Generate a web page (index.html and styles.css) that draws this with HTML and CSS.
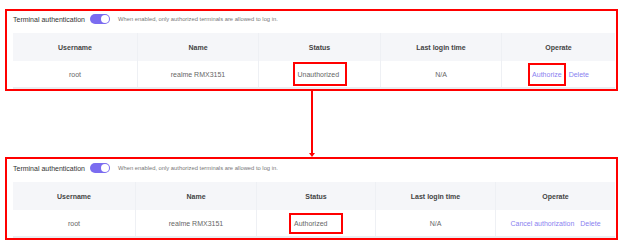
FILE: index.html
```html
<!DOCTYPE html>
<html lang="en">
<head>
  <meta charset="UTF-8">
  <meta name="viewport" content="width=device-width, initial-scale=1.0">
  <title>Terminal authentication</title>
  <link rel="stylesheet" href="styles.css">
</head>
<body>
  <div class="page">
    <div class="panel panel-before">
      <div class="panel-head">
        <span class="panel-title">Terminal authentication</span>
        <span class="switch"><span class="switch-knob"></span></span>
        <span class="panel-hint">When enabled, only authorized terminals are allowed to log in.</span>
      </div>
      <div class="table">
        <div class="row row-head">
          <div class="cell">Username</div>
          <div class="cell">Name</div>
          <div class="cell">Status</div>
          <div class="cell">Last login time</div>
          <div class="cell">Operate</div>
        </div>
        <div class="row">
          <div class="cell">root</div>
          <div class="cell">realme RMX3151</div>
          <div class="cell"><span class="mark mark-status">Unauthorized</span></div>
          <div class="cell">N/A</div>
          <div class="cell ops">
            <a class="link mark mark-op">Authorize</a>
            <a class="link">Delete</a>
          </div>
        </div>
      </div>
    </div>

    <div class="arrow">
      <span class="arrow-line"></span>
      <span class="arrow-head"></span>
    </div>

    <div class="panel panel-after">
      <div class="panel-head">
        <span class="panel-title">Terminal authentication</span>
        <span class="switch"><span class="switch-knob"></span></span>
        <span class="panel-hint">When enabled, only authorized terminals are allowed to log in.</span>
      </div>
      <div class="table">
        <div class="row row-head">
          <div class="cell">Username</div>
          <div class="cell">Name</div>
          <div class="cell">Status</div>
          <div class="cell">Last login time</div>
          <div class="cell">Operate</div>
        </div>
        <div class="row">
          <div class="cell">root</div>
          <div class="cell">realme RMX3151</div>
          <div class="cell"><span class="mark mark-status">Authorized</span></div>
          <div class="cell">N/A</div>
          <div class="cell ops ops-wide">
            <a class="link">Cancel authorization</a>
            <a class="link">Delete</a>
          </div>
        </div>
      </div>
    </div>
  </div>
</body>
</html>
```

FILE: styles.css
```css
  body {
    margin: 0;
    background-color: #ffffff;
    font-family: 'Liberation Sans', Arial, sans-serif;
    color: #555;
  }

  .page {
    padding: 9px 6px 0 5px;
  }

  .panel {
    border: 2px solid #ff0000;
    padding: 0 1px 0 6px;
    background: #ffffff;
  }

  .panel-head {
    display: flex;
    align-items: center;
    height: 16px;
    margin-bottom: 6px;
  }

  .panel-after .panel-head {
    height: 18px;
    margin-bottom: 5px;
  }

  .panel-title {
    font-size: 7px;
    color: #333;
  }

  .switch {
    display: flex;
    justify-content: flex-end;
    align-items: center;
    width: 20px;
    height: 10px;
    margin-left: 5px;
    padding: 0 1px;
    box-sizing: border-box;
    border-radius: 5px;
    background-color: #7b6cf0;
  }

  .switch-knob {
    width: 8px;
    height: 8px;
    border-radius: 50%;
    background: #ffffff;
  }

  .panel-hint {
    margin-left: 8px;
    font-size: 5.8px;
    color: #777;
  }

  .table {
    border-bottom: 2px solid #e9edf1;
  }

  .row {
    display: grid;
    grid-template-columns: 124px 121px 122px 121px 1fr;
    height: 26px;
  }

  .panel-after .row {
    grid-template-columns: 122px 121px 119px 120px 1fr;
  }

  .row-head {
    height: 28px;
    background-color: #f5f6f9;
  }

  .cell {
    display: flex;
    justify-content: center;
    align-items: center;
    font-size: 7px;
    color: #666;
    border-left: 1px solid #eef0f4;
  }

  .cell:first-child {
    border-left: none;
  }

  .row-head .cell {
    font-weight: bold;
    color: #444;
  }

  .ops {
    gap: 3px;
  }

  .ops-wide {
    gap: 6px;
  }

  .link {
    color: #8a7ff0;
    cursor: pointer;
  }

  .mark {
    display: flex;
    align-items: center;
    box-sizing: border-box;
    border: 2px solid #ff0000;
  }

  .mark-status {
    width: 54px;
    height: 24px;
    padding-left: 3px;
  }

  .panel-after .mark-status {
    height: 21px;
  }

  .mark-op {
    height: 23px;
    padding: 0 2px;
  }

  .arrow {
    display: flex;
    flex-direction: column;
    align-items: center;
    height: 66px;
  }

  .arrow-line {
    width: 2px;
    flex: 1;
    background-color: #ff0000;
  }

  .arrow-head {
    width: 0;
    height: 0;
    border-left: 3px solid transparent;
    border-right: 3px solid transparent;
    border-top: 4px solid #ff0000;
  }
```
